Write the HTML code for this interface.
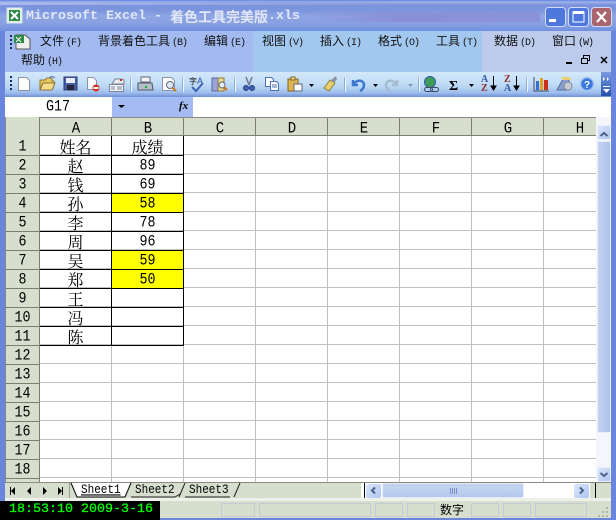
<!DOCTYPE html>
<html lang="zh"><head><meta charset="utf-8"><style>
html,body{margin:0;padding:0;background:#6a86dc}
#w{position:relative;width:616px;height:520px;overflow:hidden;background:#6a86dc;font-family:"Liberation Sans","Noto Sans CJK SC",sans-serif;color:#000}
#w div{position:absolute;box-sizing:border-box}
.t{white-space:nowrap;line-height:1}
.m{font-size:12px;top:35px;height:13px;line-height:13px;white-space:nowrap;color:#111}
.m i{font:10px "Liberation Mono",monospace;font-style:normal;letter-spacing:-1px;margin-left:2px}
.c{text-align:center;font:13.33px/19px "Liberation Mono",monospace;height:19px;transform:scaleY(1.2)}
.z{font-family:"Noto Serif CJK SC",serif;font-size:16px;transform:none}
.h{text-align:center;font:14px/18px "Liberation Mono",monospace;top:120px;height:18px;transform:scaleY(1.1)}
.r{left:6px;width:33px;text-align:center;font:13.33px/19px "Liberation Mono",monospace;height:19px;transform:scaleY(1.2)}
.y{background:#ff0;left:112px;width:72px;height:19px;}
.sb{top:503px;height:14px;border:1px solid #c4cad8}
.tb{top:485px;font:11px/13px "Liberation Mono",monospace;z-index:9;transform:scaleY(1.15)}
svg{position:absolute;left:0;top:0}
</style></head><body><div id="w">

<!-- title bar -->
<div style="left:0;top:0;width:616px;height:31px;background:linear-gradient(180deg,#5f83e0 0,#9fb2ea 2px,#7c93dc 5px,#7a94de 10px,#8fa6e4 16px,#88a0e2 24px,#7090de 31px)"></div>
<div style="left:0;top:2px;width:400px;height:3px;background:linear-gradient(90deg,#a8b8ec,#8ea4e2 70%,rgba(130,150,220,0))"></div>
<div style="left:300px;top:12px;width:240px;height:10px;background:linear-gradient(90deg,rgba(130,140,215,0),#8a90d8 40%,#8a92d8)"></div>
<div class="t" style="left:26px;top:10px;font:bold 13.33px/14px 'Liberation Mono',monospace;color:#dfe7f9;text-shadow:1px 1px 0 #8da0dc">Microsoft Excel -</div>
<div class="t" style="left:170px;top:9px;font:bold 14px/16px 'Noto Sans CJK SC',sans-serif;color:#dfe7f9;text-shadow:1px 1px 0 #8da0dc">着色工具完美版</div>
<div class="t" style="left:268px;top:10px;font:bold 13.33px/14px 'Liberation Mono',monospace;color:#dfe7f9;text-shadow:1px 1px 0 #8da0dc">.xls</div>

<!-- menu -->
<div style="left:5px;top:31px;width:606px;height:41px;background:#a2baef"></div>
<div style="left:253px;top:31px;width:229px;height:41px;background:#a3c8ef"></div>
<div style="left:482px;top:31px;width:129px;height:41px;background:#bccbec"></div>
<div class="m" style="left:40px">文件<i>(F)</i></div>
<div class="m" style="left:98px">背景着色工具<i>(B)</i></div>
<div class="m" style="left:204px">编辑<i>(E)</i></div>
<div class="m" style="left:262px">视图<i>(V)</i></div>
<div class="m" style="left:320px">插入<i>(I)</i></div>
<div class="m" style="left:378px">格式<i>(O)</i></div>
<div class="m" style="left:436px">工具<i>(T)</i></div>
<div class="m" style="left:494px">数据<i>(D)</i></div>
<div class="m" style="left:552px">窗口<i>(W)</i></div>
<div class="m" style="left:21px;top:54px">帮助<i>(H)</i></div>

<!-- toolbar -->
<div style="left:5px;top:72px;width:606px;height:25px;background:linear-gradient(180deg,#d4e8fa 0,#c4dff7 10px,#b4d2f2 16px,#9dbcec 21px,#6f8fd8 25px)"></div>

<!-- formula bar -->
<div style="left:5px;top:97px;width:606px;height:20px;background:#fff"></div>
<div style="left:112px;top:97px;width:81px;height:20px;background:#a3bbf2"></div>
<div class="t" style="left:46px;top:100px;font:13.33px/15px 'Liberation Mono',monospace;transform:scaleY(1.2)">G17</div>
<div class="t" style="left:179px;top:100px;font:italic bold 11px/13px 'Liberation Serif',serif">fx</div>

<!-- sheet -->
<div style="left:5px;top:117px;width:591px;height:365px;background-color:#fff;background-image:repeating-linear-gradient(90deg,transparent 0,transparent 71px,#c0c0c0 71px,#c0c0c0 72px),repeating-linear-gradient(180deg,transparent 0,transparent 18px,#c0c0c0 18px,#c0c0c0 19px);background-position:35px 19px"></div>
<div style="left:5px;top:117px;width:591px;height:19px;background:#d6dfce;border-top:1px solid #8a8a80;border-bottom:1px solid #7d7d70"></div>
<div style="left:5px;top:117px;width:35px;height:365px;background:#d6dfce;border-right:1px solid #7d7d70;border-left:1px solid #8a8a80"></div>
<svg width="616" height="520" style="z-index:1"><g stroke="#7d7d70" stroke-width="1" shape-rendering="crispEdges"><path d="M111.5 118V136M183.5 118V136M255.5 118V136M327.5 118V136M399.5 118V136M471.5 118V136M543.5 118V136"/><path d="M6 155.5H39M6 174.5H39M6 193.5H39M6 212.5H39M6 231.5H39M6 250.5H39M6 269.5H39M6 288.5H39M6 307.5H39M6 326.5H39M6 345.5H39M6 364.5H39M6 383.5H39M6 402.5H39M6 421.5H39M6 440.5H39M6 459.5H39M6 478.5H39"/></g></svg>

<div class="h" style="left:40px;width:72px;z-index:2">A</div><div class="h" style="left:112px;width:72px;z-index:2">B</div><div class="h" style="left:184px;width:72px;z-index:2">C</div><div class="h" style="left:256px;width:72px;z-index:2">D</div><div class="h" style="left:328px;width:72px;z-index:2">E</div><div class="h" style="left:400px;width:72px;z-index:2">F</div><div class="h" style="left:472px;width:72px;z-index:2">G</div><div class="h" style="left:544px;width:52px;padding-left:20px;z-index:2">H</div>

<div class="y" style="top:193px;z-index:1"></div><div class="y" style="top:250px;z-index:1"></div><div class="y" style="top:269px;z-index:1"></div>
<svg width="616" height="520" style="z-index:2"><g stroke="#000" fill="none" shape-rendering="crispEdges"><path d="M40 155.5H184M40 174.5H184M40 193.5H184M40 212.5H184M40 231.5H184M40 250.5H184M40 269.5H184M40 288.5H184M40 307.5H184M40 326.5H184M40 345.5H184"/><path d="M111.5 136V346M183.5 136V346"/></g></svg>

<div style="z-index:3;left:0;top:0;width:616px;height:520px">
<div class="r" style="top:138px">1</div><div class="r" style="top:157px">2</div><div class="r" style="top:176px">3</div><div class="r" style="top:195px">4</div><div class="r" style="top:214px">5</div><div class="r" style="top:233px">6</div><div class="r" style="top:252px">7</div><div class="r" style="top:271px">8</div><div class="r" style="top:290px">9</div><div class="r" style="top:309px">10</div><div class="r" style="top:328px">11</div><div class="r" style="top:347px">12</div><div class="r" style="top:366px">13</div><div class="r" style="top:385px">14</div><div class="r" style="top:404px">15</div><div class="r" style="top:423px">16</div><div class="r" style="top:442px">17</div><div class="r" style="top:461px">18</div>

<div class="c z" style="left:40px;width:71px;top:137px">姓名</div><div class="c z" style="left:112px;width:71px;top:137px">成绩</div>
<div class="c z" style="left:40px;width:71px;top:156px">赵</div><div class="c" style="left:112px;width:71px;top:157px">89</div>
<div class="c z" style="left:40px;width:71px;top:175px">钱</div><div class="c" style="left:112px;width:71px;top:176px">69</div>
<div class="c z" style="left:40px;width:71px;top:194px">孙</div><div class="c" style="left:112px;width:71px;top:195px">58</div>
<div class="c z" style="left:40px;width:71px;top:213px">李</div><div class="c" style="left:112px;width:71px;top:214px">78</div>
<div class="c z" style="left:40px;width:71px;top:232px">周</div><div class="c" style="left:112px;width:71px;top:233px">96</div>
<div class="c z" style="left:40px;width:71px;top:251px">吴</div><div class="c" style="left:112px;width:71px;top:252px">59</div>
<div class="c z" style="left:40px;width:71px;top:270px">郑</div><div class="c" style="left:112px;width:71px;top:271px">50</div>
<div class="c z" style="left:40px;width:71px;top:289px">王</div>
<div class="c z" style="left:40px;width:71px;top:308px">冯</div>
<div class="c z" style="left:40px;width:71px;top:327px">陈</div>
</div>

<!-- vertical scrollbar -->
<div style="left:596px;top:117px;width:15px;height:365px;background:#f4f6fc;z-index:3"></div>
<div style="left:597px;top:125px;width:14px;height:15px;background:linear-gradient(135deg,#dbe6fb,#aec4f2);border:1px solid #e8eefc;border-radius:2px;z-index:3"></div>
<div style="left:597px;top:141px;width:14px;height:292px;background:linear-gradient(90deg,#c2d2f0,#b8c9ee 60%,#a9c6ee);border:1px solid #e6ecfa;border-radius:2px;z-index:3"></div>
<div style="left:597px;top:467px;width:14px;height:15px;background:linear-gradient(135deg,#dbe6fb,#aec4f2);border:1px solid #e8eefc;border-radius:2px;z-index:3"></div>

<!-- tab row -->
<div style="left:5px;top:482px;width:606px;height:19px;background:#d6dfce;border-top:1px solid #8a8a80;z-index:3"></div>
<div style="left:5px;top:498px;width:606px;height:3px;background:#eef1ea;z-index:3"></div>
<div class="t tb" style="left:81px;text-decoration:underline">Sheet1</div>
<div class="t tb" style="left:135px">Sheet2</div>
<div class="t tb" style="left:189px">Sheet3</div>

<!-- horizontal scrollbar -->
<div style="left:361px;top:483px;width:229px;height:15px;background:#fff;z-index:4"></div>
<div style="left:382px;top:483px;width:142px;height:15px;background:linear-gradient(180deg,#bfcfef,#c2d4f2 30%,#b4c6ec);border:1px solid #e6ecfa;border-radius:2px;z-index:4"></div>
<div style="left:366px;top:484px;width:15px;height:14px;background:linear-gradient(135deg,#dbe6fb,#aec4f2);border-radius:2px;z-index:4"></div>
<div style="left:574px;top:484px;width:15px;height:14px;background:linear-gradient(135deg,#dbe6fb,#aec4f2);border-radius:2px;z-index:4"></div>

<!-- status bar -->
<div style="left:5px;top:501px;width:606px;height:17px;background:#d6dfce;z-index:3"></div>
<div style="left:0;top:501px;width:160px;height:19px;background:#000;z-index:6"></div>
<div class="t" style="left:9px;top:503px;font:13.33px/14px 'Liberation Mono',monospace;color:#0f0;z-index:7;-webkit-text-stroke:.3px #0f0">18:53:10 2009-3-16</div>
<div class="sb" style="left:221px;width:34px;z-index:4"></div><div class="sb" style="left:259px;width:112px;z-index:4"></div><div class="sb" style="left:375px;width:28px;z-index:4"></div><div class="sb" style="left:407px;width:28px;z-index:4"></div>
<div class="sb" style="left:471px;width:28px;z-index:4"></div><div class="sb" style="left:503px;width:28px;z-index:4"></div><div class="sb" style="left:535px;width:52px;z-index:4"></div>
<div class="t" style="left:440px;top:503px;font:12px/14px 'Liberation Sans','Noto Sans CJK SC',sans-serif;z-index:5">数字</div>

<!-- icons -->
<svg width="616" height="520" style="z-index:8">
 <!-- excel title icon -->
 <rect x="7" y="8" width="15" height="15" fill="#e8f3e4" stroke="#d8e4ee"/><rect x="9" y="10" width="11" height="11" fill="#2c8a46"/><path d="M11 12l7 7M18 12l-7 7" stroke="#fff" stroke-width="2"/>
 <!-- window buttons -->
 <rect x="545.5" y="7.5" width="20" height="19" rx="3" fill="#4f78dc" stroke="#d0dcf6"/><rect x="549" y="19" width="7" height="3" fill="#fff"/>
 <rect x="568.5" y="7.5" width="20" height="19" rx="3" fill="#4f78dc" stroke="#d0dcf6"/><rect x="573" y="12" width="11" height="10" fill="none" stroke="#fff"/><rect x="573" y="11" width="11" height="3" fill="#fff"/>
 <rect x="591.5" y="7.5" width="20" height="19" rx="3" fill="#a8656e" stroke="#d0dcf6"/><path d="M597 12l9 10M606 12l-9 10" stroke="#fff" stroke-width="2.2"/>
 <!-- menu grip + doc icon -->
 <g fill="#1a2a60"><rect x="10" y="35" width="2" height="2"/><rect x="10" y="39" width="2" height="2"/><rect x="10" y="43" width="2" height="2"/><rect x="10" y="47" width="2" height="2"/></g>
 <path d="M16 35h9l5 4v10H16z" fill="#eef0f0" stroke="#555"/><rect x="14" y="35" width="10" height="8" fill="#2c8a46"/><path d="M16 37l5 5M21 37l-5 5" stroke="#fff"/>
 <!-- mdi buttons -->
 <rect x="566" y="62" width="6" height="2" fill="#000"/><rect x="583.5" y="55.5" width="6" height="5" fill="none" stroke="#000"/><rect x="581.5" y="58.5" width="6" height="5" fill="#bccbec" stroke="#000"/><path d="M601 57l6 6M607 57l-6 6" stroke="#000" stroke-width="1.5"/>
 <!-- toolbar grip -->
 <g fill="#1a2a70"><rect x="10" y="76" width="2" height="2"/><rect x="10" y="80" width="2" height="2"/><rect x="10" y="84" width="2" height="2"/><rect x="10" y="88" width="2" height="2"/></g>
 <!-- new -->
 <path d="M18.5 77.500h8l3 3v10h-11z" fill="#fdfdfd" stroke="#8c94a8"/>
 <!-- open -->
 <path d="M40 90V80h5l2-2h5v3h2v2l-3 7z" fill="#e8c860" stroke="#8c7430"/><path d="M40 90l3-7h12l-3 7z" fill="#f4dc88" stroke="#8c7430"/><path d="M49 78c2-2 4-2 6 0" stroke="#5a7ab8" fill="none"/>
 <!-- save -->
 <rect x="64" y="77" width="13" height="13" fill="#4a5ea8" stroke="#2c3a78"/><rect x="66" y="78" width="9" height="5" fill="#e8eef8"/><rect x="67" y="85" width="7" height="5" fill="#222838"/>
 <!-- permission -->
 <path d="M87.500 77.500h6l3 3v9h-9z" fill="#fdfdfd" stroke="#8c94a8"/><circle cx="96" cy="88" r="3.500" fill="#d03020"/><rect x="93.500" y="87" width="5" height="2" fill="#fff"/>
 <!-- email -->
 <path d="M112 84l3-5h6l3 1v4z" fill="#e8ecf2" stroke="#7c8698"/><rect x="109.500" y="84.500" width="14" height="7" fill="#f0f4f8" stroke="#7c8698"/><path d="M111 87h4M111 89h4M117 87h5M117 89h5" stroke="#7c8698"/><rect x="120" y="79" width="2" height="2" fill="#d03020"/>
 <!-- sep -->
 <path d="M130.500 77v15M182.500 77v15M234.500 77v15M344.500 77v15M418.500 77v15M526.500 77v15" stroke="#8fb0de"/><path d="M131.500 77v15M183.500 77v15M235.500 77v15M345.500 77v15M419.500 77v15M527.500 77v15" stroke="#f0f6fe"/>
 <!-- print -->
 <path d="M141 77h9v5h-9z" fill="#f4f4f4" stroke="#60687c"/><path d="M138 83h14l1 7h-15z" fill="#b4bcc8" stroke="#505868"/><rect x="145" y="86" width="2" height="2" fill="#20b040"/>
 <!-- preview -->
 <path d="M162.500 77.500h9l3 3v10h-12z" fill="#fdfdfd" stroke="#8c94a8"/><circle cx="170" cy="85" r="3.500" fill="#dfeafa" stroke="#60687c"/><path d="M172.500 88l3.500 3" stroke="#c87818" stroke-width="2"/>
 <!-- spell -->
 <text x="189" y="84" font-family="Noto Sans CJK SC,sans-serif" font-size="8" fill="#111">字</text><text x="197" y="84" font-family="Liberation Sans,sans-serif" font-size="9" fill="#2850a8">A</text><path d="M192 87l4 4 7-8" stroke="#3c62b4" stroke-width="2" fill="none"/>
 <!-- research -->
 <rect x="212" y="78" width="6" height="13" fill="#9aa4d8" stroke="#5a64a0"/><rect x="218" y="78" width="6" height="13" fill="#ecd88c" stroke="#8a7c40"/><circle cx="222" cy="85" r="3" fill="#e8f0fa" stroke="#60687c"/><path d="M224 87l3 3" stroke="#c87818" stroke-width="2"/>
 <!-- cut -->
 <path d="M246 77l3 8M252 77l-3 8" stroke="#70788c" stroke-width="1.500"/><circle cx="246" cy="88" r="2.500" fill="#4060b8" stroke="#24407c"/><circle cx="252" cy="88" r="2.500" fill="#4060b8" stroke="#24407c"/>
 <!-- copy -->
 <path d="M265.500 77.500h6l2 2v7h-8z" fill="#fdfdfd" stroke="#4c70b8"/><path d="M270.500 81.500h6l2 2v7h-8z" fill="#fdfdfd" stroke="#4c70b8"/><path d="M272 85h5M272 87h5" stroke="#4c70b8"/>
 <!-- paste -->
 <rect x="288" y="79" width="10" height="12" fill="#e0b450" stroke="#806420"/><rect x="291" y="77" width="4" height="3" fill="#f0e0a0" stroke="#806420"/><rect x="294" y="84" width="8" height="7" fill="#fdfdfd" stroke="#606878"/>
 <path d="M309 84h5l-2.500 3z M373 84h5l-2.500 3z M469 84h5l-2.500 3 z" fill="#000"/><path d="M408 84h5l-2.500 3z" fill="#8a98ac"/>
 <!-- brush -->
 <path d="M324 88l6-8 5 3-6 8z" fill="#e8d070" stroke="#8a8038"/><path d="M331 80l5-4 1 3-3 4z" fill="#8a94a4"/>
 <!-- undo / redo -->
 <path d="M353 80v5h5M354 84c3-5 10-4 10 1 0 3-2 5-4 6" fill="none" stroke="#3c78d0" stroke-width="2.500"/>
 <path d="M397 80v5h-5M396 84c-3-5-10-4-10 1 0 3 2 5 4 6" fill="none" stroke="#a6bcd0" stroke-width="2.500"/>
 <!-- hyperlink -->
 <circle cx="430" cy="82" r="5.500" fill="#3f9c58" stroke="#2c5aa8"/><rect x="424.500" y="87.500" width="8" height="4" rx="2" fill="none" stroke="#404a60"/><rect x="430.500" y="87.500" width="8" height="4" rx="2" fill="none" stroke="#404a60"/>
 <!-- sum -->
 <text x="449" y="90" font-family="Liberation Serif,serif" font-size="14" font-weight="bold" fill="#000">Σ</text>
 <!-- sort -->
 <text x="481" y="82" font-family="Liberation Serif,serif" font-size="10" font-weight="bold" fill="#3458a8">A</text><text x="481" y="91" font-family="Liberation Serif,serif" font-size="10" font-weight="bold" fill="#903030">Z</text><path d="M493.500 76v13M491 86l2.500 4 2.500-4z" stroke="#000" fill="#000"/>
 <text x="504" y="82" font-family="Liberation Serif,serif" font-size="10" font-weight="bold" fill="#903030">Z</text><text x="504" y="91" font-family="Liberation Serif,serif" font-size="10" font-weight="bold" fill="#3458a8">A</text><path d="M516.500 76v13M514 86l2.500 4 2.500-4z" stroke="#000" fill="#000"/>
 <!-- chart -->
 <path d="M534 77v14h15" fill="none" stroke="#404858"/><rect x="536" y="81" width="3" height="9" fill="#3870d0"/><rect x="540" y="78" width="3" height="12" fill="#e8a020"/><rect x="544" y="80" width="4" height="10" fill="#c83020"/>
 <!-- drawing -->
 <path d="M557 90l6-11h6v11z" fill="#8aa0d0" stroke="#5a6c98"/><path d="M562 77h8l1 3-9 0z" fill="#e8d070"/><circle cx="568" cy="86" r="4" fill="#c8ccd4" stroke="#80889c"/>
 <!-- help -->
 <circle cx="587" cy="84" r="6.500" fill="#3a78e0" stroke="#a8c4f0" stroke-width="1.500"/><text x="584" y="88" font-family="Liberation Sans,sans-serif" font-size="10" font-weight="bold" fill="#fff">?</text>
 <!-- chevron -->
 <defs><linearGradient id="cv" x1="0" y1="0" x2="0" y2="1"><stop offset="0" stop-color="#7a9be4"/><stop offset="1" stop-color="#2450a8"/></linearGradient></defs>
 <rect x="601" y="72" width="10" height="24" fill="url(#cv)"/><path d="M603 77l2 2-2 2zM607 77l2 2-2 2z" fill="#fff"/><rect x="603" y="86" width="7" height="1" fill="#fff"/><path d="M603 89h7l-3.500 4z" fill="#fff"/>
 <!-- name box arrow -->
 <path d="M118 105h7l-3.500 3z" fill="#000"/>
 <!-- scroll arrows -->
 <path d="M600.500 136l3.500-3 3.500 3" fill="none" stroke="#4d6185" stroke-width="2"/>
 <path d="M600.500 473l3.500 3 3.500-3" fill="none" stroke="#4d6185" stroke-width="2"/>
 <path d="M375 487.500l-3 3 3 3" fill="none" stroke="#4d6185" stroke-width="2"/>
 <path d="M580 487.500l3 3-3 3" fill="none" stroke="#4d6185" stroke-width="2"/>
 <path d="M450.500 488v6M452.500 488v6M454.500 488v6M456.500 488v6" stroke="#7c90c8"/>
 <path d="M364.500 483v15M595.500 483v15" stroke="#000"/>
 <!-- tab nav -->
 <path d="M10.500 487v8" stroke="#000"/><path d="M15 487l-4 4 4 4zM31 487l-4 4 4 4zM43 487l4 4-4 4zM58 487l4 4-4 4z" fill="#000"/><path d="M62.500 487v8" stroke="#000"/>
 <path d="M69.500 483v15" stroke="#9a9a90"/>
 <!-- tabs -->
 <path d="M71 483L77 497H125L131 483z" fill="#fff"/>
 <path d="M71 483l6 14H125l6-14" fill="none" stroke="#000"/>
 <path d="M131 497H175l5-3M185 483l-6 14M185 497H230M240 483l-6 14M131 483l-6 14" fill="none" stroke="#222"/>
 <!-- grip -->
 <g fill="#b0b8a8"><rect x="606" y="507" width="2" height="2"/><rect x="602" y="511" width="2" height="2"/><rect x="606" y="511" width="2" height="2"/><rect x="598" y="515" width="2" height="2"/><rect x="602" y="515" width="2" height="2"/><rect x="606" y="515" width="2" height="2"/></g>
</svg>
</div></body></html>
